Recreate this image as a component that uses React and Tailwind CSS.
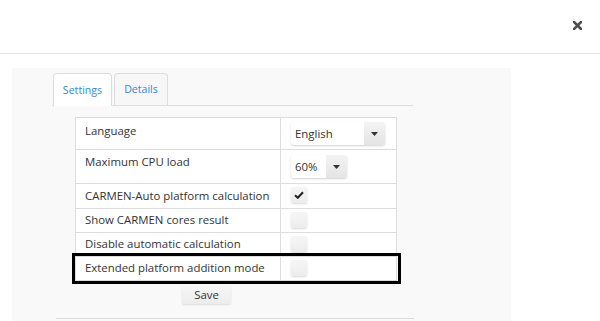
import React from "react";

function Caret() {
  return (
    <svg width="7" height="4" viewBox="0 0 7 4" className="block">
      <path d="M0 0 L7 0 L3.5 4 Z" fill="#333" />
    </svg>
  );
}

function Select({ value, w, textW }) {
  return (
    <div
      className={`flex h-[23px] ${w} rounded-[3px] bg-white shadow-[0_1px_2px_rgba(0,0,0,0.18)]`}
    >
      <div className={`${textW} flex items-center pl-[4px] text-[11.4px] text-[#333]`}>{value}</div>
      <div className="flex w-[21px] items-center justify-center rounded-r-[3px] bg-gradient-to-b from-[#f4f4f4] to-[#e4e4e4]">
        <Caret />
      </div>
    </div>
  );
}

function Check({ checked }) {
  return (
    <div className="flex h-[16px] w-[16px] items-center justify-center rounded-[2px] bg-gradient-to-b from-[#f6f6f6] to-[#ececec] shadow-[0_1px_2px_rgba(0,0,0,0.15)]">
      {checked && (
        <svg width="10" height="8" viewBox="0 0 10 8">
          <path d="M1 4.2 L3.8 6.8 L9 1.2" stroke="#222" strokeWidth="2" fill="none" />
        </svg>
      )}
    </div>
  );
}

function Row({ label, h, pt, children, cpt }) {
  return (
    <div className={`flex ${h} border-t border-[#dddddd]`}>
      <div className={`w-[205px] border-r border-[#dddddd] pl-[9px] ${pt} text-[11.4px] leading-[16px] text-[#333]`}>
        {label}
      </div>
      <div className={`flex-1 pl-[10px] ${cpt}`}>{children}</div>
    </div>
  );
}

export default function App() {
  return (
    <div
      className="flex h-[321px] w-[600px] flex-col overflow-hidden bg-white"
      style={{ fontFamily: '"Open Sans", "Noto Sans", sans-serif' }}
    >
      <div className="flex h-[54px] shrink-0 items-start justify-end border-b border-[#e5e5e5] pr-[18px] pt-[21px]">
        <svg width="9" height="9" viewBox="0 0 9 9" className="opacity-80">
          <path d="M1 1 L8 8 M8 1 L1 8" stroke="#222" strokeWidth="2.6" strokeLinecap="square" />
        </svg>
      </div>
      <div className="pt-[14px]">
        <div className="ml-[12px] h-[260px] w-[499px] bg-[#f9f9f9] pt-[5px]">
          <div className="ml-[40px] w-[361px]">
            <div className="flex h-[33px] gap-[2px] border-b border-[#dddddd] pl-[1px]">
              <div className="-mb-px flex h-[33px] w-[59px] items-center justify-center rounded-t-[4px] border border-b-0 border-[#dddddd] bg-white pt-[2px] text-[10.6px] text-[#3a88c8]">
                Settings
              </div>
              <div className="flex h-[32px] w-[54px] items-center justify-center rounded-t-[4px] border border-b-0 border-[#dddddd] bg-[#f7f7f7] pt-[1px] text-[10.6px] text-[#3a88c8]">
                Details
              </div>
            </div>
            <div className="relative ml-[23px] mt-[11px] w-[322px] border-b border-l border-r border-[#dddddd] bg-white">
              <Row label="Language" h="h-[32px]" pt="pt-[5px]" cpt="pt-[4px]">
                <Select value="English" w="w-[94px]" textW="w-[73px]" />
              </Row>
              <Row label="Maximum CPU load" h="h-[34px]" pt="pt-[4px]" cpt="pt-[5px]">
                <Select value="60%" w="w-[56px]" textW="w-[35px]" />
              </Row>
              <Row label="CARMEN-Auto platform calculation" h="h-[25px]" pt="pt-[4px]" cpt="pt-[3px]">
                <Check checked />
              </Row>
              <Row label="Show CARMEN cores result" h="h-[24px]" pt="pt-[3px]" cpt="pt-[3px]">
                <Check />
              </Row>
              <Row label="Disable automatic calculation" h="h-[24px]" pt="pt-[3px]" cpt="pt-[3px]">
                <Check />
              </Row>
              <Row label="Extended platform addition mode" h="h-[24px]" pt="pt-[3px]" cpt="pt-[3px]">
                <Check />
              </Row>
              <div className="pointer-events-none absolute bottom-[-4px] left-[-4px] right-[-5px] h-[31px] border-[3px] border-black" />
            </div>
            <div className="ml-[130px] mt-[4px] flex h-[19px] w-[49px] items-center justify-center rounded-[2px] bg-gradient-to-b from-[#f7f7f7] to-[#ececec] text-[11.4px] text-[#333] shadow-[0_1px_2px_rgba(0,0,0,0.12)]">
              Save
            </div>
            <div className="ml-[4px] mt-[14px] h-px w-[358px] bg-[#dddddd]" />
          </div>
        </div>
      </div>
    </div>
  );
}
